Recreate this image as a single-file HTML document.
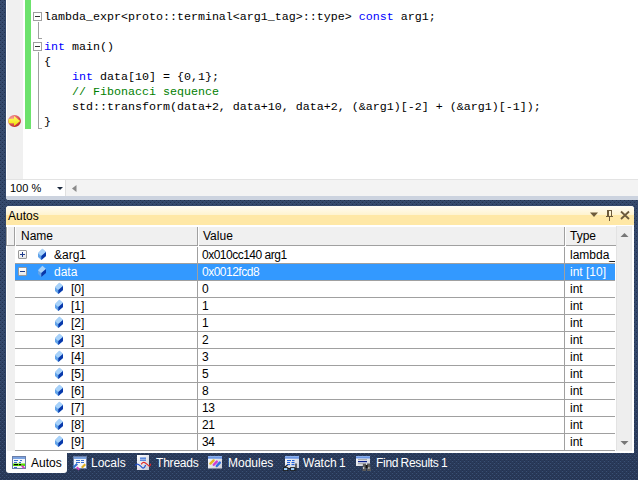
<!DOCTYPE html>
<html><head><meta charset="utf-8">
<style>
*{margin:0;padding:0;box-sizing:border-box}
html,body{width:638px;height:480px;overflow:hidden}
body{position:relative;background:#293955;font-family:"Liberation Sans",sans-serif;font-size:12px;color:#000}
.a{position:absolute}
#ed{left:6px;top:0;width:632px;height:200px;background:#fff;border-bottom-left-radius:3px;overflow:hidden}
#margin{left:1px;top:0;width:16px;height:179px;background:#f0f0f0}
#green{left:19px;top:0;width:6px;height:129px;background:#6ce26c}
.code{font-family:"Liberation Mono",monospace;font-size:11.667px;white-space:pre;line-height:15px;height:15px;left:38px}
.kw{color:#0000ff}.cm{color:#008000}
.fbox{width:9px;height:9px;border:1px solid #a0a0a0;background:#fff}
.fbox:after{content:"";position:absolute;left:1px;top:3px;width:5px;height:1px;background:#333}
.fl{background:#a0a0a0}
#bar{left:0;top:179px;width:632px;height:17px;background:#f3f3f3;border-top:1px solid #e3e3e3}
#combo{left:0;top:0;width:60px;height:16px;background:#fff;border-right:1px solid #e0e0e0}
#strip{left:0;top:196px;width:632px;height:4px;background:#ccd3df}
#panel{left:6px;top:206px;width:628px;height:247px;background:#fff;border-radius:3px 3px 0 0;overflow:hidden}
#cap{left:0;top:0;width:628px;height:19px;background:linear-gradient(#fffcf4 0,#fff3cd 50%,#ffe8a6 50%,#ffe8a6 100%)}
.t{white-space:nowrap}
.tw{color:#fff}
.vv{letter-spacing:-0.5px}
.exp{width:9px;height:9px;border:1px solid #999;border-radius:1px;background:linear-gradient(#fff,#e8e8e8)}
.exp .h{position:absolute;left:1px;top:3px;width:5px;height:1px;background:#1e3c8c}
.exp .v{position:absolute;left:3px;top:1px;width:1px;height:5px;background:#1e3c8c}
</style></head><body>
<svg width="0" height="0" style="position:absolute"><defs><linearGradient id="wb" x1="0" y1="0" x2="1" y2="1"><stop offset="0" stop-color="#ffffff"/><stop offset="1" stop-color="#c8ccd8"/></linearGradient><linearGradient id="tb" x1="0" y1="0" x2="0" y2="1"><stop offset="0" stop-color="#9cbcf0"/><stop offset="1" stop-color="#4c80e0"/></linearGradient>
<g id="cube"><path d="M4.4 0.8L8 4V7.9L3.3 12L0 8.9V5.3z" fill="#62a4ea"/><path d="M4.4 0.8L8 4L3.2 7.9L0 5.3z" fill="#a8d2fa"/><path d="M8 4V7.9L3.3 12V7.9z" fill="#0838aa"/></g>
</defs></svg>
<svg class="a" style="left:0;top:0" width="638" height="480"><defs><linearGradient id="bgg" x1="0" y1="0" x2="0" y2="1"><stop offset="0" stop-color="#35496b"/><stop offset="0.7" stop-color="#33476a"/><stop offset="1" stop-color="#283857"/></linearGradient><pattern id="dots" width="4" height="4" patternUnits="userSpaceOnUse"><rect x="0" y="0" width="1" height="1" fill="#233250"/><rect x="2" y="2" width="1" height="1" fill="#233250"/><rect x="0" y="1" width="1" height="1" fill="#3a5074"/><rect x="2" y="3" width="1" height="1" fill="#3a5074"/></pattern></defs><rect width="638" height="480" fill="url(#bgg)"/><rect width="638" height="480" fill="url(#dots)"/></svg>
<div id="ed" class="a">
  <div id="margin" class="a"></div>
  <div id="green" class="a"></div>
  <!-- fold boxes -->
  <div class="a fbox" style="left:27px;top:12px"></div>
  <div class="a fl" style="left:32px;top:22px;width:1px;height:16px"></div>
  <div class="a fl" style="left:32px;top:38px;width:4px;height:1px"></div>
  <div class="a fbox" style="left:27px;top:42px"></div>
  <div class="a fl" style="left:32px;top:52px;width:1px;height:76px"></div>
  <div class="a fl" style="left:32px;top:128px;width:4px;height:1px"></div>
  <div class="a code" style="top:10px">lambda_expr&lt;proto::terminal&lt;arg1_tag&gt;::type&gt; <span class="kw">const</span> arg1;</div>
  <div class="a code" style="top:40px"><span class="kw">int</span> main()</div>
  <div class="a code" style="top:55px">{</div>
  <div class="a code" style="top:70px">    <span class="kw">int</span> data[10] = {0,1};</div>
  <div class="a code" style="top:85px">    <span class="cm">// Fibonacci sequence</span></div>
  <div class="a code" style="top:100px">    std::transform(data+2, data+10, data+2, (&amp;arg1)[-2] + (&amp;arg1)[-1]);</div>
  <div class="a code" style="top:115px">}</div>
  <div id="bar" class="a">
    <div id="combo" class="a"><span class="a t" style="left:4px;top:2px;font-size:11px">100 %</span><svg class="a" style="left:51px;top:7px" width="7" height="4"><path d="M0 0h6L3 3z" fill="#1b293e"/></svg></div><svg class="a" style="left:66px;top:5px" width="5" height="7"><path d="M4.5 0V7L0 3.5z" fill="#8a8a8a"/></svg>
  </div>
  <div id="strip" class="a"></div>
</div>
<div id="panel" class="a">
  <div id="cap" class="a"><span class="a t" style="left:2px;top:3px">Autos</span></div>
<svg class="a" style="left:582px;top:2px" width="46" height="16" viewBox="588 208 46 16"><path d="M590 212.5h8l-4 4.5z" fill="#6d5b3c"/><path d="M607 210h5v6h1v1h-3v4h-1v-4h-3v-1h1zM609 211v5h2v-5z" fill="#6d5b3c" fill-rule="evenodd"/><path d="M621 211.5l8 7.5M629 211.5l-8 7.5" stroke="#6d5b3c" stroke-width="1.8" fill="none"/></svg>
<div class="a" style="left:0;top:21px;width:610px;height:19px;background:#f0f0f0;border-bottom:1px solid #a0a0a0"></div>
<div class="a" style="left:0;top:21px;width:1px;height:19px;background:#a0a0a0"></div>
<div class="a" style="left:1px;top:21px;width:1px;height:18px;background:#fff"></div>
<div class="a" style="left:8px;top:21px;width:1px;height:19px;background:#a0a0a0"></div>
<div class="a" style="left:9px;top:21px;width:1px;height:19px;background:#fff"></div>
<div class="a" style="left:191px;top:21px;width:1px;height:19px;background:#a0a0a0"></div>
<div class="a" style="left:192px;top:21px;width:1px;height:19px;background:#fff"></div>
<div class="a" style="left:558px;top:21px;width:1px;height:19px;background:#a0a0a0"></div>
<div class="a" style="left:559px;top:21px;width:1px;height:19px;background:#fff"></div>
<span class="a t" style="left:15px;top:23px">Name</span>
<span class="a t" style="left:197px;top:23px">Value</span>
<span class="a t" style="left:564px;top:23px">Type</span>
<div class="a" style="left:1px;top:40px;width:8px;height:205px;background:#f0f0f0"></div>
<div class="a exp" style="left:12px;top:44px"><i class="h"></i><i class="v"></i></div>
<svg class="a" style="left:32px;top:42px" width="9" height="12" viewBox="0 0 9 12"><use href="#cube"/></svg>
<span class="a t" style="left:48px;top:42px;color:#000">&amp;arg1</span>
<span class="a t vv" style="left:196px;top:42px;color:#000">0x010cc140 arg1</span>
<div class="a t" style="left:564px;top:42px;width:45px;overflow:hidden;color:#000">lambda_</div>
<div class="a" style="left:9px;top:57px;width:600px;height:1px;background:#a0a0a0"></div>
<div class="a" style="left:9px;top:58px;width:600px;height:16px;background:#3399ff"></div>
<div class="a exp" style="left:12px;top:61px"><i class="h"></i></div>
<svg class="a" style="left:32px;top:59px" width="9" height="12" viewBox="0 0 9 12"><use href="#cube"/></svg>
<span class="a t" style="left:48px;top:59px;color:#fff">data</span>
<span class="a t vv" style="left:196px;top:59px;color:#fff">0x0012fcd8</span>
<div class="a t" style="left:564px;top:59px;width:45px;overflow:hidden;color:#fff">int [10]</div>
<div class="a" style="left:9px;top:74px;width:600px;height:1px;background:#a0a0a0"></div>
<svg class="a" style="left:49px;top:76px" width="9" height="12" viewBox="0 0 9 12"><use href="#cube"/></svg>
<span class="a t" style="left:65px;top:76px;color:#000">[0]</span>
<span class="a t vv" style="left:196px;top:76px;color:#000">0</span>
<div class="a t" style="left:564px;top:76px;width:45px;overflow:hidden;color:#000">int</div>
<div class="a" style="left:9px;top:91px;width:600px;height:1px;background:#a0a0a0"></div>
<svg class="a" style="left:49px;top:93px" width="9" height="12" viewBox="0 0 9 12"><use href="#cube"/></svg>
<span class="a t" style="left:65px;top:93px;color:#000">[1]</span>
<span class="a t vv" style="left:196px;top:93px;color:#000">1</span>
<div class="a t" style="left:564px;top:93px;width:45px;overflow:hidden;color:#000">int</div>
<div class="a" style="left:9px;top:108px;width:600px;height:1px;background:#a0a0a0"></div>
<svg class="a" style="left:49px;top:110px" width="9" height="12" viewBox="0 0 9 12"><use href="#cube"/></svg>
<span class="a t" style="left:65px;top:110px;color:#000">[2]</span>
<span class="a t vv" style="left:196px;top:110px;color:#000">1</span>
<div class="a t" style="left:564px;top:110px;width:45px;overflow:hidden;color:#000">int</div>
<div class="a" style="left:9px;top:125px;width:600px;height:1px;background:#a0a0a0"></div>
<svg class="a" style="left:49px;top:127px" width="9" height="12" viewBox="0 0 9 12"><use href="#cube"/></svg>
<span class="a t" style="left:65px;top:127px;color:#000">[3]</span>
<span class="a t vv" style="left:196px;top:127px;color:#000">2</span>
<div class="a t" style="left:564px;top:127px;width:45px;overflow:hidden;color:#000">int</div>
<div class="a" style="left:9px;top:142px;width:600px;height:1px;background:#a0a0a0"></div>
<svg class="a" style="left:49px;top:144px" width="9" height="12" viewBox="0 0 9 12"><use href="#cube"/></svg>
<span class="a t" style="left:65px;top:144px;color:#000">[4]</span>
<span class="a t vv" style="left:196px;top:144px;color:#000">3</span>
<div class="a t" style="left:564px;top:144px;width:45px;overflow:hidden;color:#000">int</div>
<div class="a" style="left:9px;top:159px;width:600px;height:1px;background:#a0a0a0"></div>
<svg class="a" style="left:49px;top:161px" width="9" height="12" viewBox="0 0 9 12"><use href="#cube"/></svg>
<span class="a t" style="left:65px;top:161px;color:#000">[5]</span>
<span class="a t vv" style="left:196px;top:161px;color:#000">5</span>
<div class="a t" style="left:564px;top:161px;width:45px;overflow:hidden;color:#000">int</div>
<div class="a" style="left:9px;top:176px;width:600px;height:1px;background:#a0a0a0"></div>
<svg class="a" style="left:49px;top:178px" width="9" height="12" viewBox="0 0 9 12"><use href="#cube"/></svg>
<span class="a t" style="left:65px;top:178px;color:#000">[6]</span>
<span class="a t vv" style="left:196px;top:178px;color:#000">8</span>
<div class="a t" style="left:564px;top:178px;width:45px;overflow:hidden;color:#000">int</div>
<div class="a" style="left:9px;top:193px;width:600px;height:1px;background:#a0a0a0"></div>
<svg class="a" style="left:49px;top:195px" width="9" height="12" viewBox="0 0 9 12"><use href="#cube"/></svg>
<span class="a t" style="left:65px;top:195px;color:#000">[7]</span>
<span class="a t vv" style="left:196px;top:195px;color:#000">13</span>
<div class="a t" style="left:564px;top:195px;width:45px;overflow:hidden;color:#000">int</div>
<div class="a" style="left:9px;top:210px;width:600px;height:1px;background:#a0a0a0"></div>
<svg class="a" style="left:49px;top:212px" width="9" height="12" viewBox="0 0 9 12"><use href="#cube"/></svg>
<span class="a t" style="left:65px;top:212px;color:#000">[8]</span>
<span class="a t vv" style="left:196px;top:212px;color:#000">21</span>
<div class="a t" style="left:564px;top:212px;width:45px;overflow:hidden;color:#000">int</div>
<div class="a" style="left:9px;top:227px;width:600px;height:1px;background:#a0a0a0"></div>
<svg class="a" style="left:49px;top:229px" width="9" height="12" viewBox="0 0 9 12"><use href="#cube"/></svg>
<span class="a t" style="left:65px;top:229px;color:#000">[9]</span>
<span class="a t vv" style="left:196px;top:229px;color:#000">34</span>
<div class="a t" style="left:564px;top:229px;width:45px;overflow:hidden;color:#000">int</div>
<div class="a" style="left:9px;top:244px;width:600px;height:1px;background:#a0a0a0"></div>
<div class="a" style="left:191px;top:41px;width:1px;height:204px;background:#a0a0a0"></div>
<div class="a" style="left:558px;top:41px;width:1px;height:204px;background:#a0a0a0"></div>
<div class="a" style="left:610px;top:20px;width:16px;height:225px;background:#eeeeee;border-left:1px solid #e3e3e3;border-right:1px solid #e8e8e8"></div>
<svg class="a" style="left:614px;top:26px" width="9" height="6"><path d="M0.5 5L4.5 1L8.5 5z" fill="#777"/></svg>
<svg class="a" style="left:614px;top:234px" width="9" height="6"><path d="M0.5 1L4.5 5L8.5 1z" fill="#777"/></svg>
</div>
<div class="a" style="left:6px;top:452px;width:61px;height:21px;background:linear-gradient(#fff,#fdfdfd);border-radius:0 0 3px 3px"></div>
<svg class="a" style="left:12px;top:456px" width="14" height="14" viewBox="0 0 14 14">
<rect x="0.5" y="0.5" width="13" height="12" fill="#f4f6fa" stroke="#6b7fa8"/>
<rect x="1" y="1" width="12" height="2" fill="#7aa2e0"/>
<rect x="2" y="4" width="4" height="1" fill="#3a6fd0"/><rect x="8" y="4" width="2" height="1" fill="#3a6fd0"/>
<rect x="2" y="6" width="3" height="1" fill="#3a6fd0"/><rect x="7" y="6" width="2" height="1" fill="#3a6fd0"/>
<rect x="1" y="7.5" width="12" height="2.5" fill="#55e000"/>
<rect x="2" y="8" width="4" height="1.2" fill="#000"/><rect x="7" y="8" width="2" height="1.2" fill="#000"/>
<rect x="2" y="11" width="3" height="1" fill="#3a6fd0"/>
<path d="M9 10l2.5 3 1.5-1.5-2.5-2.5z" fill="#d040c0"/>
</svg>
<span class="a t" style="left:31px;top:456px">Autos</span>
<svg class="a" style="left:72px;top:456px" width="15" height="15" viewBox="0 0 15 15">
<rect x="1.5" y="0.5" width="13" height="12" fill="#f4f6fa" stroke="#6b7fa8"/>
<rect x="2" y="1" width="12" height="2" fill="#7aa2e0"/>
<rect x="4" y="4" width="4" height="1" fill="#3a6fd0"/><rect x="9" y="4" width="3" height="1" fill="#3a6fd0"/>
<rect x="4" y="6" width="4" height="1" fill="#3a6fd0"/><rect x="9" y="6" width="3" height="1" fill="#3a6fd0"/>
<path d="M0.5 11l4-4 1.5 1.5-4 4z" fill="#3070d0"/>
<path d="M9 11l3.5-3.5 1.5 1.5-3.5 3.5z" fill="#e0b020"/>
<path d="M4 12l2.5 2.5 1.5-1.5-2.5-2.5z" fill="#d040c0"/>
</svg>
<span class="a t tw" style="left:91px;top:456px">Locals</span>
<svg class="a" style="left:134px;top:454px" width="18" height="17" viewBox="134 454 18 17">
<rect x="137" y="455" width="12" height="15" fill="url(#wb)"/>
<rect x="140" y="457.6" width="6" height="1.1" fill="#2060d8"/><rect x="140" y="459.6" width="6" height="1.1" fill="#2060d8"/>
<path d="M135.2 465.6Q136.5 463.4 138.5 464.6T142.2 467.6T145.6 465" stroke="#2050d0" stroke-width="1.2" fill="none"/>
<path d="M141.2 464.4Q143 461.5 145 462.8T148.6 465.6T150.6 463.8" stroke="#e02828" stroke-width="1.2" fill="none"/>
</svg>
<span class="a t tw" style="left:156px;top:456px;letter-spacing:-0.2px">Threads</span>
<svg class="a" style="left:207px;top:455px" width="17" height="15" viewBox="207 455 17 15">
<rect x="208" y="456" width="14" height="12.5" fill="url(#wb)"/>
<rect x="208" y="456" width="14" height="2.6" fill="url(#tb)"/>
<path d="M210.4 463.6L213.6 460.4" stroke="#e8b820" stroke-width="2.4" stroke-linecap="round"/>
<path d="M213.8 464.8L216.8 461.6" stroke="#d040d0" stroke-width="2.4" stroke-linecap="round"/>
<path d="M216.8 466L219.8 462.6" stroke="#3070e0" stroke-width="2.4" stroke-linecap="round"/>
</svg>
<span class="a t tw" style="left:228px;top:456px">Modules</span>
<svg class="a" style="left:282px;top:455px" width="18" height="17" viewBox="282 455 18 17">
<rect x="285" y="456" width="14" height="12" fill="url(#wb)"/>
<rect x="285" y="456" width="14" height="2.6" fill="url(#tb)"/>
<rect x="287" y="460" width="4" height="1.1" fill="#2060d8"/><rect x="292" y="460" width="2.5" height="1.1" fill="#2060d8"/>
<rect x="287" y="462" width="3" height="1.1" fill="#2060d8"/><rect x="291.5" y="462" width="3" height="1.1" fill="#2060d8"/>
<rect x="287" y="464" width="3" height="1.1" fill="#2060d8"/><rect x="291.5" y="464" width="3" height="1.1" fill="#2060d8"/>
<path d="M283.5 470.5l1.5-3.5 2.5-2 M296 470.5v-7" stroke="#222" stroke-width="1.3" fill="none"/>
<rect x="283.6" y="467.6" width="4.2" height="3" fill="#9cd0ff" stroke="#1a1a1a" stroke-width="0.9"/>
<rect x="290.6" y="467.6" width="4.2" height="3" fill="#9cd0ff" stroke="#1a1a1a" stroke-width="0.9"/>
<path d="M287.8 468.4h2.8" stroke="#1a1a1a" stroke-width="1"/>
</svg>
<span class="a t tw" style="left:303px;top:456px;word-spacing:-1px">Watch 1</span>
<svg class="a" style="left:355px;top:455px" width="17" height="17" viewBox="355 455 17 17">
<rect x="356" y="456" width="14" height="10" fill="url(#wb)"/>
<rect x="356" y="456" width="14" height="2.4" fill="url(#tb)"/>
<rect x="358" y="459.2" width="9" height="1" fill="#a0a0a0"/><rect x="358" y="461" width="9" height="1.2" fill="#0a1e8c"/><rect x="358" y="463.2" width="5" height="1" fill="#a0a0a0"/>
<path d="M363 463.5h3v7.5h-3.6z" fill="#5a5a5a"/><path d="M367 463.5h3l1 7.5h-4z" fill="#5a5a5a"/><rect x="365.6" y="465" width="2" height="3" fill="#111"/>
<rect x="363.2" y="467" width="1" height="2" fill="#ddd"/><rect x="368.4" y="467" width="1" height="2" fill="#ddd"/>
</svg>
<span class="a t tw" style="left:376px;top:456px;letter-spacing:-0.3px;word-spacing:-0.6px">Find Results 1</span>
<svg class="a" style="left:7px;top:114px" width="15" height="14" viewBox="7 114 15 14">
<defs><radialGradient id="rg" cx="0.35" cy="0.3" r="0.75"><stop offset="0" stop-color="#f8a0a0"/><stop offset="0.55" stop-color="#e06060"/><stop offset="1" stop-color="#b82020"/></radialGradient>
<linearGradient id="yg" x1="0" y1="0" x2="0" y2="1"><stop offset="0" stop-color="#ffff70"/><stop offset="1" stop-color="#f0e000"/></linearGradient></defs>
<ellipse cx="14.5" cy="121" rx="6.4" ry="6.1" fill="url(#rg)"/>
<path d="M8.6 118.8H14V116L20.2 121L14 126V123.2H8.6z" fill="url(#yg)"/>
</svg>
</body></html>
